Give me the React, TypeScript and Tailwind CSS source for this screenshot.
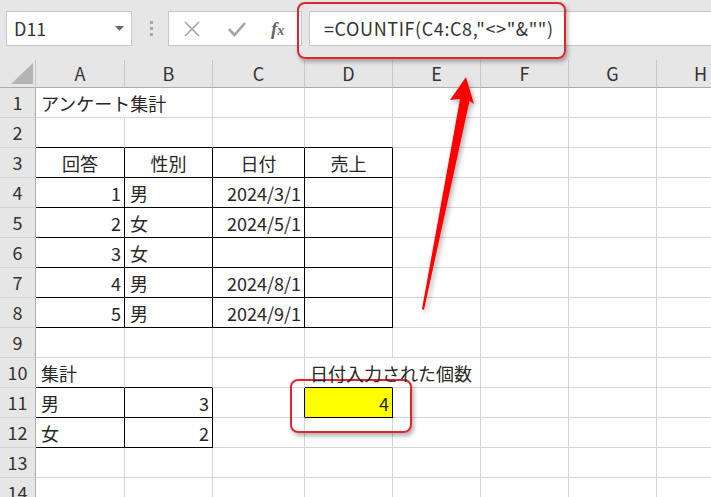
import React from "react";

const COLS = ["A", "B", "C", "D", "E", "F", "G", "H"];
const ROWS = [1, 2, 3, 4, 5, 6, 7, 8, 9, 10, 11, 12, 13, 14];

type Cell = { v: string; align?: "l" | "r" | "c"; fill?: boolean; spill?: boolean };

const data: Record<string, Cell> = {
  A1: { v: "アンケート集計", spill: true },
  A3: { v: "回答", align: "c" },
  B3: { v: "性別", align: "c" },
  C3: { v: "日付", align: "c" },
  D3: { v: "売上", align: "c" },
  A4: { v: "1", align: "r" },
  B4: { v: "男" },
  C4: { v: "2024/3/1", align: "r" },
  A5: { v: "2", align: "r" },
  B5: { v: "女" },
  C5: { v: "2024/5/1", align: "r" },
  A6: { v: "3", align: "r" },
  B6: { v: "女" },
  A7: { v: "4", align: "r" },
  B7: { v: "男" },
  C7: { v: "2024/8/1", align: "r" },
  A8: { v: "5", align: "r" },
  B8: { v: "男" },
  C8: { v: "2024/9/1", align: "r" },
  A10: { v: "集計" },
  D10: { v: "日付入力された個数", spill: true },
  A11: { v: "男" },
  B11: { v: "3", align: "r" },
  A12: { v: "女" },
  B12: { v: "2", align: "r" },
  D11: { v: "4", align: "r", fill: true },
};

// boxed ranges: [row1, row2, col1, col2] (cols 0-based)
const boxes = [
  [3, 8, 0, 3],
  [11, 12, 0, 1],
  [11, 11, 3, 3],
];

const inBox = (r: number, c: number) =>
  boxes.some(([r1, r2, c1, c2]) => r >= r1 && r <= r2 && c >= c1 && c <= c2);

const font = { fontFamily: '"Noto Sans CJK JP", "Noto Sans", sans-serif' };

function GridCell({ r, c }: { r: number; c: number }) {
  const key = COLS[c] + r;
  const cell = data[key];
  const blackRight = inBox(r, c) || inBox(r, c + 1);
  const blackBottom = inBox(r, c) || inBox(r + 1, c);
  const spillFromLeft = c > 0 && data[COLS[c - 1] + r]?.spill;
  return (
    <div
      className={
        "relative flex items-center whitespace-nowrap text-[18px] text-[#262626] " +
        (blackRight
          ? "border-r border-r-black "
          : cell?.spill
            ? "border-r border-r-transparent "
            : "border-r border-r-[#d4d4d4] ") +
        (blackBottom ? "border-b border-b-black " : "border-b border-b-[#d4d4d4] ") +
        (cell?.fill ? "bg-[#ffff00] " : "") +
        (cell?.spill ? "z-10 " : "") +
        (cell?.align === "r"
          ? "justify-end pr-[3px]"
          : cell?.align === "c"
            ? "justify-center"
            : "justify-start pl-[5px]")
      }
      data-spill={spillFromLeft ? "1" : undefined}
    >
      {cell && <span className="leading-none">{cell.v}</span>}
    </div>
  );
}

export default function App() {
  return (
    <div className="relative w-[711px] h-[497px] overflow-hidden bg-white" style={font}>
      {/* toolbar */}
      <div className="flex items-center h-[60px] bg-[#e6e6e6] pl-[6px] pb-[3px]">
        <div className="flex items-center justify-between w-[126px] h-[35px] bg-white border border-[#c6c6c6] pl-[7px] pr-[7px]">
          <span className="text-[18px] text-[#333]">D11</span>
          <svg width="9" height="6" viewBox="0 0 9 6">
            <path d="M0 0 H9 L4.5 5 Z" fill="#666" />
          </svg>
        </div>
        <div className="flex flex-col gap-[3px] ml-[18px] mr-[15px]">
          <div className="w-[3px] h-[3px] bg-[#a8a8a8]" />
          <div className="w-[3px] h-[3px] bg-[#a8a8a8]" />
          <div className="w-[3px] h-[3px] bg-[#a8a8a8]" />
        </div>
        <div className="flex items-center w-[134px] h-[35px] bg-white border border-[#c6c6c6]">
          <svg width="18" height="18" viewBox="0 0 18 18" className="ml-[14px]">
            <path d="M2 2 L16 16 M16 2 L2 16" stroke="#a6a6a6" strokeWidth="1.6" />
          </svg>
          <svg width="20" height="18" viewBox="0 0 20 18" className="ml-[26px]">
            <path d="M2 9 L7.5 15 L18 3" stroke="#a6a6a6" strokeWidth="2.6" fill="none" />
          </svg>
          <span
            className="ml-[24px] text-[19px] italic font-bold text-[#666] leading-none"
            style={{ fontFamily: '"Liberation Serif", serif' }}
          >
            f<span className="text-[14px]">x</span>
          </span>
        </div>
        <div className="flex items-center flex-1 h-[35px] ml-[7px] bg-white border-y border-l border-[#c6c6c6] pl-[14px]">
          <span className="text-[18px] tracking-[0.6px] text-[#333]">=COUNTIF(C4:C8,"&lt;&gt;"&amp;"")</span>
        </div>
      </div>

      {/* sheet */}
      <div className="grid grid-cols-[36px_89px_88px_92px_88px_88px_88px_88px_88px] grid-rows-[28px_repeat(14,30px)]">
        <div className="relative bg-[#e6e6e6] border-r border-r-[#c8c8c8] border-b border-b-[#ababab]">
          <svg width="22" height="21" viewBox="0 0 22 21" className="absolute left-[11px] top-[3px]">
            <path d="M22 0 V21 H0 Z" fill="#b4b4b4" />
          </svg>
        </div>
        {COLS.map((c) => (
          <div
            key={c}
            className="flex items-center justify-center bg-[#e6e6e6] border-r border-r-[#c8c8c8] border-b border-b-[#ababab] text-[18px] text-[#333]"
          >
            {c}
          </div>
        ))}
        {ROWS.map((r) => (
          <React.Fragment key={r}>
            <div className="flex items-center justify-center bg-[#e6e6e6] border-r border-r-[#ababab] border-b border-b-[#d4d4d4] text-[18px] text-[#333]">
              {r}
            </div>
            {COLS.map((_, c) => (
              <GridCell key={c} r={r} c={c} />
            ))}
          </React.Fragment>
        ))}
      </div>

      {/* callouts */}
      <div className="absolute left-[297px] top-[2px] w-[269px] h-[57px] rounded-[8px] border-2 border-[#e0262b] shadow-[2px_3px_4px_rgba(0,0,0,0.3)]" />
      <div className="absolute left-[290px] top-[379px] w-[122px] h-[54px] rounded-[8px] border-2 border-[#e0262b] shadow-[2px_3px_4px_rgba(0,0,0,0.3)]" />
      <svg className="absolute left-0 top-0" width="711" height="497" viewBox="0 0 711 497">
        <defs>
          <filter id="sh" x="-20%" y="-20%" width="140%" height="140%">
            <feDropShadow dx="2" dy="3" stdDeviation="2.5" floodColor="#000" floodOpacity="0.3" />
          </filter>
        </defs>
        <path
          d="M466 77 L474 104 L469.5 101 L424 310 L422 309 L460 99 L450 100 Z"
          fill="#ff0000"
          filter="url(#sh)"
        />
      </svg>
    </div>
  );
}
